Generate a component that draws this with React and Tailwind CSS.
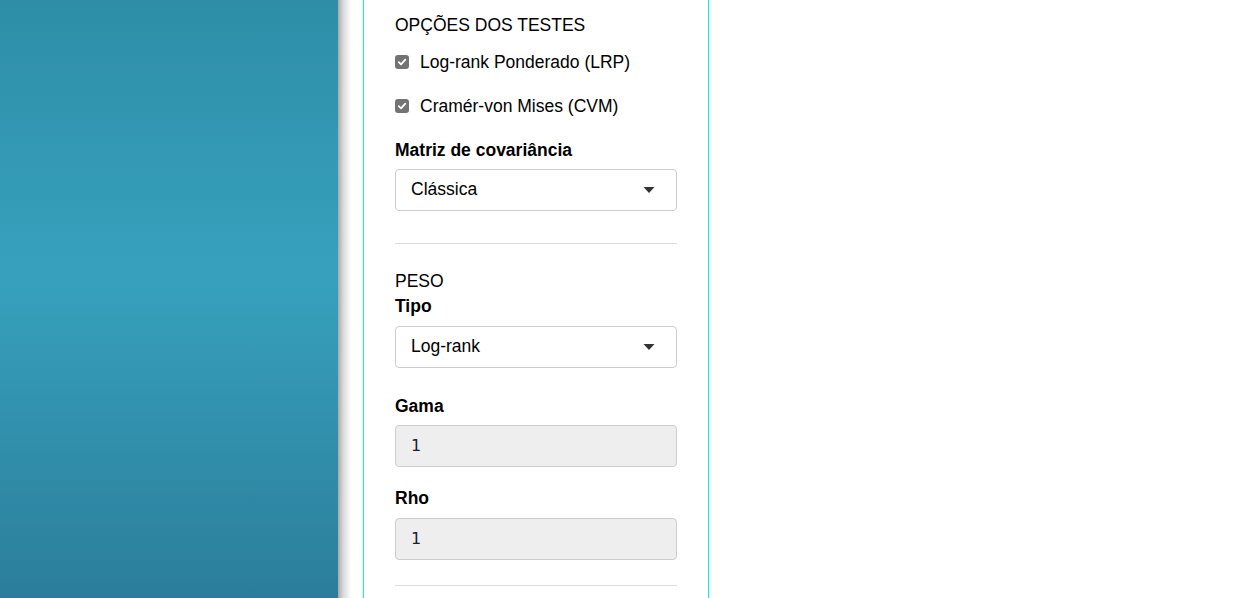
export default function App() {
  const Check = ({ label }) => (
    <div className="flex items-center h-6">
      <div className="w-[14px] h-[14px] rounded-[3px] bg-[#737373] flex items-center justify-center mr-[11px]">
        <svg width="10" height="10" viewBox="0 0 10 10">
          <path d="M1.8 5.2 L4 7.3 L8.3 2.6" fill="none" stroke="white" strokeWidth="1.8" strokeLinecap="round" strokeLinejoin="round" />
        </svg>
      </div>
      <span>{label}</span>
    </div>
  );
  const Select = ({ value, cls }) => (
    <div className={`h-[42px] border border-[#cccccc] rounded-[4px] bg-white flex items-center justify-between pl-[15px] pr-[21px] pb-[2px] ${cls}`}>
      <span>{value}</span>
      <svg width="12" height="6" viewBox="0 0 12 6" className="mt-[1px]"><path d="M0.5 0 L11.5 0 L6 6 Z" fill="#333" /></svg>
    </div>
  );
  const Input = ({ cls }) => (
    <div className={`h-[42px] border border-[#cccccc] rounded-[4px] bg-[#eeeeee] flex items-center pl-[15px] text-[#1a1a3a] ${cls}`} style={{ fontFamily: '"DejaVu Sans", sans-serif' }}>
      <span className="text-[16px]">1</span>
    </div>
  );
  return (
    <div className="w-[1257px] h-[598px] overflow-hidden flex bg-white text-[17.5px] leading-6 text-black" style={{ fontFamily: '"Liberation Sans", Arial, sans-serif' }}>
      <div className="w-[338px] h-full bg-[linear-gradient(to_bottom,#2e8ea8_0%,#37a1bd_46%,#2b7e9b_100%)]" />
      <div className="w-[13px] h-full bg-[linear-gradient(to_right,#a9a9a9,#d9d9d9_40%,#ffffff)]" />
      <div className="w-[12px]" />
      <div className="w-[346px] h-full border-l border-r border-[#00f5e0] pl-[31px] pr-[31px] pt-[13px] flex flex-col">
        <div>OPÇÕES DOS TESTES</div>
        <div className="mt-[13px]"><Check label="Log-rank Ponderado (LRP)" /></div>
        <div className="mt-[20px]"><Check label="Cramér-von Mises (CVM)" /></div>
        <div className="mt-[20px] font-bold">Matriz de covariância</div>
        <Select value="Clássica" cls="mt-[7px]" />
        <div className="mt-[32px] h-px bg-[#dddddd]" />
        <div className="mt-[25px]">PESO</div>
        <div className="mt-[1px] font-bold">Tipo</div>
        <Select value="Log-rank" cls="mt-[8px]" />
        <div className="mt-[26px] font-bold">Gama</div>
        <Input cls="mt-[7px]" />
        <div className="mt-[19px] font-bold">Rho</div>
        <Input cls="mt-[8px]" />
        <div className="mt-[25px] h-px bg-[#dddddd]" />
      </div>
    </div>
  );
}
